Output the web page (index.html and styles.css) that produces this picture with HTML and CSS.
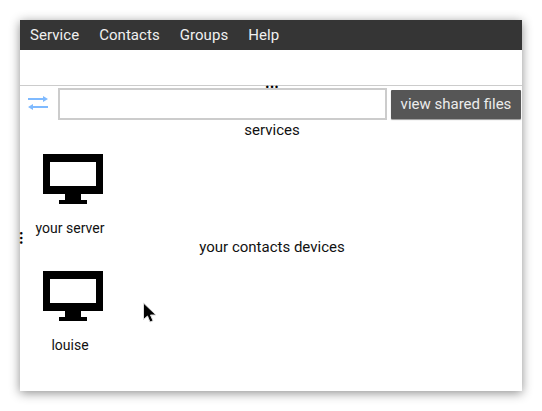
FILE: index.html
```html
<!DOCTYPE html>
<html lang="en">

<head>
  <meta charset="UTF-8" />
  <title>Services</title>
  <link rel="stylesheet" href="styles.css">
</head>

<body>
  <div class="ventana">
    <nav class="menu">
      <span class="menu-item">Service</span>
      <span class="menu-item">Contacts</span>
      <span class="menu-item">Groups</span>
      <span class="menu-item">Help</span>
    </nav>
    <div class="franja">
      <span class="puntos">...</span>
    </div>
    <div class="contenido">
      <span class="puntos-lado">...</span>
      <div class="barra">
        <svg class="icono-cambio" width="20" height="16" viewBox="0 0 20 16">
          <path d="M0 2h15v-2l5 3-5 3v-2h-15z M20 10h-15v-2l-5 3 5 3v-2h15z" fill="#7fbaff" />
        </svg>
        <input class="campo" type="text">
        <button class="boton">view shared files</button>
      </div>
      <div class="titulo">services</div>
      <div class="dispositivo">
        <svg class="pantalla" width="60" height="50" viewBox="0 0 60 50">
          <path fill-rule="evenodd" d="M0 0h60v40h-22v6h6v4h-28v-4h6v-6h-22z M7 8v24h46v-24z" />
        </svg>
        <span class="nombre">your server</span>
      </div>
      <div class="titulo titulo-contactos">your contacts devices</div>
      <div class="dispositivo">
        <svg class="pantalla" width="60" height="50" viewBox="0 0 60 50">
          <path fill-rule="evenodd" d="M0 0h60v40h-22v6h6v4h-28v-4h6v-6h-22z M7 8v24h46v-24z" />
        </svg>
        <span class="nombre">louise</span>
      </div>
      <svg class="cursor" width="16" height="22" viewBox="0 0 16 22">
        <path d="M1.500 1v16.500l4-3.500 2.500 6 3-1.200-2.500-5.800h5.500z" fill="#000" stroke="#ddd" stroke-width="1" />
      </svg>
    </div>
  </div>
</body>

</html>
```

FILE: styles.css
```css
body {
  margin: 0;
  padding: 20px;
  background: #fff;
  font-family: Roboto, sans-serif;
}

.ventana {
  width: 502px;
  height: 371px;
  background: #fff;
  box-shadow: 0 2px 10px rgba(0, 0, 0, 0.45);
  display: flex;
  flex-direction: column;
}

.menu {
  height: 30px;
  background: #353535;
  display: flex;
  align-items: center;
  gap: 20px;
  padding-left: 10px;
}

.menu-item {
  color: #f0f0f0;
  font-size: 15px;
  letter-spacing: 0.05px;
}

.franja {
  height: 35px;
  border-bottom: 1px solid #ccc;
  display: flex;
  justify-content: center;
  align-items: flex-end;
  padding-left: 2px;
}

.puntos {
  font-size: 16px;
  font-weight: bold;
  line-height: 1px;
  height: 3px;
  color: #000;
}

.contenido {
  position: relative;
  flex: 1;
}

.puntos-lado {
  position: absolute;
  left: -2px;
  top: 144px;
  transform: rotate(90deg);
  font-size: 16px;
  font-weight: bold;
  line-height: 1;
}

.barra {
  display: flex;
  align-items: center;
  padding: 2px 1px 0 8px;
}

.icono-cambio {
  margin-right: 10px;
}

.campo {
  width: 329px;
  height: 32px;
  box-sizing: border-box;
  border: 2px solid #ccc;
  background: #fff;
  margin-right: 4px;
}

.boton {
  width: 130px;
  height: 29px;
  background: #565656;
  color: #ececec;
  border: none;
  border-radius: 1px;
  box-shadow: 0 1px 1px rgba(0, 0, 0, 0.4);
  font-family: Roboto, sans-serif;
  font-size: 15px;
  padding: 0;
}

.titulo {
  text-align: center;
  font-size: 15px;
  color: #111;
  line-height: 18px;
  margin-top: 1px;
  padding-left: 2px;
}

.titulo-contactos {
  margin-top: 1px;
}

.dispositivo {
  width: 100px;
  display: flex;
  flex-direction: column;
  align-items: center;
  margin-top: 15px;
}

.pantalla {
  display: block;
  margin-bottom: 16px;
  margin-left: 6px;
}

.nombre {
  font-size: 14px;
  line-height: 17px;
  color: #111;
}

.cursor {
  position: absolute;
  left: 122px;
  top: 216px;
}
```
